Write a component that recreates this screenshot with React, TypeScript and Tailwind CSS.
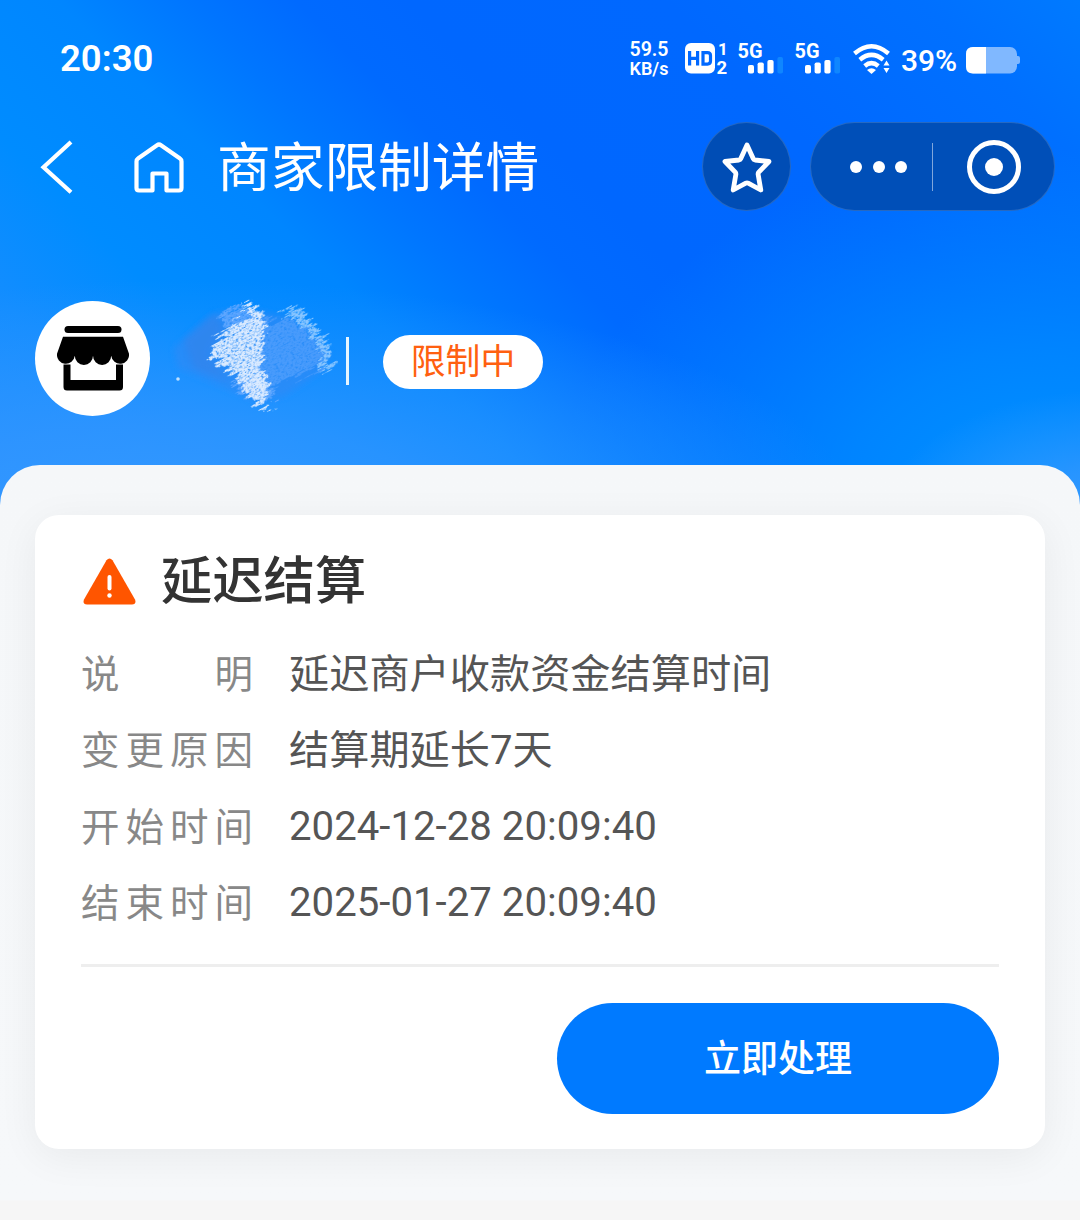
import React from "react";

const ROWS = [
    { label: ["说", "明"], value: "延迟商户收款资金结算时间", cjk: true },
    { label: ["变", "更", "原", "因"], value: "结算期延长7天", cjk: true },
    { label: ["开", "始", "时", "间"], value: "2024-12-28 20:09:40", cjk: false },
    { label: ["结", "束", "时", "间"], value: "2025-01-27 20:09:40", cjk: false },
];

function Signal() {
    return (
        <svg className="block h-8 w-[46px] overflow-visible" viewBox="0 0 46 32" fill="#fff">
            <text x="-0.5" y="16" fontSize="20" fontWeight="700" fontFamily="Roboto, sans-serif" textLength="25" lengthAdjust="spacingAndGlyphs">
                5G
            </text>
            <rect x="10" y="23" width="6" height="8.5" rx="1.8" />
            <rect x="19.6" y="20.5" width="6.2" height="11" rx="1.8" />
            <rect x="29.4" y="18" width="6.2" height="13.5" rx="1.8" />
            <rect x="39.4" y="15" width="5.6" height="16.5" rx="1.8" fill="#0f86ff" />
        </svg>
    );
}

function HdBadge() {
    return (
        <svg className="block h-8 w-[43px] overflow-visible" viewBox="0 0 43 32" fontFamily="Roboto, sans-serif" fontWeight="700">
            <rect x="0" y="1" width="30" height="30.5" rx="6" fill="#fff" />
            <g fill="none" stroke="#0068ff" strokeWidth="3.2">
                <path d="M4.6 9v14.6M12.6 9v14.6M4.6 16.3h8" />
                <path d="M18 10.6h4.5q3 0 3 3v5.5q0 3-3 3h-4.5z" />
            </g>
            <text x="33" y="13" fontSize="17" fill="#fff">1</text>
            <text x="31.5" y="31.5" fontSize="18.5" fill="#fff">2</text>
        </svg>
    );
}

function Wifi() {
    return (
        <svg className="block h-8 w-[38px]" viewBox="0 0 38 32" fill="none" stroke="#fff" strokeWidth="4.4">
            <path d="M1.5 11.5Q18.5-3 35.5 11.5" />
            <path d="M6.8 17.7Q18.5 8 30.2 17.7" />
            <path d="M11.7 24Q18.500 18.300 25.300 24" />
            <path d="M14 28Q18.500 24.500 23 28L18.500 32z" fill="#fff" stroke="none" />
            <path d="M33.500 18.500l3 5h-6zM33.500 31l3-5h-6z" fill="#fff" stroke="none" />
        </svg>
    );
}

function Battery() {
    return (
        <svg className="block h-8 w-[54px]" viewBox="0 0 54 32">
            <rect x="0" y="5" width="51" height="26.5" rx="7" fill="#80b8ff" />
            <path d="M51 14h1q2 0 2 2v4q0 2-2 2h-1z" fill="#80b8ff" />
            <path d="M20 5H7Q0 5 0 12v12.500q0 7 7 7h13z" fill="#fff" />
        </svg>
    );
}

function StoreIcon() {
    return (
        <svg className="mt-0.5 h-[66px] w-[72px]" viewBox="0 0 72 66" fill="#000">
            <rect x="7.5" y="0" width="57" height="7" rx="3.5" />
            <path d="M6 10.8h60l6 17a8.4 8.4 0 0 1-17.8 2a9 9 0 0 1-18.2 0a9 9 0 0 1-18.2 0A8.4 8.4 0 0 1 0 27.8z" />
            <path d="M6.5 38.5h7V54h45.500V38.500h7V61q0 3.500-3.500 3.500h-52.500q-3.500 0-3.500-3.500z" />
        </svg>
    );
}

/* Scribbled-over merchant name */
function MaskedName() {
    return (
        <svg className="h-[120px] w-[170px]" viewBox="168 298 170 120">
            <defs>
                <filter id="chalk" x="-15%" y="-15%" width="130%" height="130%">
                    <feTurbulence type="fractalNoise" baseFrequency="0.03 0.28" numOctaves="3" seed="4" result="edge" />
                    <feDisplacementMap in="SourceGraphic" in2="edge" scale="24" xChannelSelector="R" yChannelSelector="G" result="rough" />
                    <feTurbulence type="fractalNoise" baseFrequency="0.35 0.7" numOctaves="3" seed="9" />
                    <feColorMatrix values="0 0 0 0 1  0 0 0 0 1  0 0 0 0 1  3 0 0 0 -0.6" result="grain" />
                    <feComposite in="rough" in2="grain" operator="in" />
                </filter>
                <filter id="smudge">
                    <feGaussianBlur stdDeviation="3" />
                </filter>
            </defs>
            <path d="M174 348l38-34 30-6 50 10 38 36-10 18-36 24-26 6-46-20-34-14z" fill="#2f8af6" opacity="0.7" filter="url(#smudge)" />
            <path d="M184 340l30-26 10 14-16 28 20 24-34-12z" fill="#3a80e4" opacity="0.45" filter="url(#smudge)" />
            <g transform="rotate(-28 252 358)">
                <g filter="url(#chalk)">
                    <g transform="rotate(28 252 358)">
                        <path d="M262 320l24-2 22 10 18 30-22 16-34 12-16-14z" fill="#4a9bfc" />
                        <path d="M282 312l12-4 12 6 8 10 10 10 9 26-5 6-12 5 6-14-6-20-12-12-12-6z" fill="#8ac6ff" />
                        <path d="M218 316l22-10 20 6 4 12-20 6-20-4z" fill="#5da6ff" />
                        <path d="M232 384l14-8 24 8 8 16-14 2-20-6z" fill="#5da6ff" />
                    </g>
                </g>
                <g filter="url(#chalk)">
                    <g transform="rotate(28 252 358)">
                        <path d="M242 303l12 2 13 11-4 14 1 18-3 12 5 12 6 10-6 14 3 14-12-6-14-14-6-12-12-10-13-8-3-8 8-14 14-13 20-8z" fill="#dcebff" />
                    </g>
                </g>
            </g>
            <circle cx="178" cy="379" r="1.8" fill="#bfe1ff" />
        </svg>
    );
}

export default function App() {
    return (
        <div className="flex h-[1220px] w-[1080px] flex-col overflow-hidden bg-[radial-gradient(ellipse_680px_240px_at_180px_520px,rgba(56,154,255,0.9)_0%,rgba(52,150,255,0.75)_40%,rgba(40,144,255,0)_100%),radial-gradient(ellipse_230px_130px_at_1110px_520px,rgba(56,154,255,1)_0%,rgba(48,150,255,0.8)_40%,rgba(40,144,255,0)_100%),radial-gradient(ellipse_480px_340px_at_1040px_490px,rgba(0,146,255,1)_0%,rgba(0,142,255,0.75)_40%,rgba(0,134,255,0)_100%),linear-gradient(45deg,#1f90ff_0%,#128dff_14%,#008cff_24%,#0086ff_36%,#0076ff_44%,#006aff_51%,#0067ff_58%,#0068ff_74%,#0070ff_90%,#007aff_100%)] bg-[length:1080px_520px] bg-no-repeat font-[Roboto,'Noto_Sans_CJK_SC',sans-serif]">
            <header className="h-[465px] shrink-0 text-white">
                <div className="flex h-[110px] items-start pt-[42px] pl-[60px]">
                    <span className="-mt-px w-[567px] text-[36.5px] leading-9 font-semibold">20:30</span>
                    <div className="flex w-[44px] flex-col items-center text-[18px] leading-[18.5px] font-semibold">
                        <span className="-mt-px text-[19.5px]">59.5</span>
                        <span>KB/s</span>
                    </div>
                    <div className="ml-3.5">
                        <HdBadge />
                    </div>
                    <div className="ml-2.5">
                        <Signal />
                    </div>
                    <div className="ml-[11px]">
                        <Signal />
                    </div>
                    <div className="ml-[12px]">
                        <Wifi />
                    </div>
                    <span className="ml-2.5 w-[65px] pt-px text-[30px] leading-9 font-medium">39%</span>
                    <Battery />
                </div>

                <div className="flex h-[113px] items-center pl-10">
                    <svg className="h-[54px] w-[33px]" viewBox="0 0 33 54" fill="none" stroke="#fff" strokeWidth="4.2">
                        <path d="M31 2L3.500 27.300l27.500 25" />
                    </svg>
                    <svg className="ml-[61px] h-[52px] w-[50px]" viewBox="0 0 50 52" fill="none" stroke="#fff" strokeWidth="4.2" strokeLinejoin="round">
                        <path d="M23 4.2q2-1.4 4 0L46 17.5q1.5 1 1.5 3V47q0 2.5-2.5 2.5H32.5v-17h-14v17H5Q2.5 49.5 2.5 47V20.5q0-2 1.5-3z" />
                    </svg>
                    <h1 className="ml-[33px] w-[485px] pt-[5px] text-[53.7px] leading-none whitespace-nowrap">商家限制详情</h1>
                    <div className="flex size-[89px] items-center justify-center rounded-full border border-white/15 bg-[#004db5]">
                        <svg className="size-[52px]" viewBox="0 0 52 52" fill="none" stroke="#fff" strokeWidth="4.8" strokeLinejoin="round">
                            <path d="M26 4l6.3 13.7q.5 1.1 1.7 1.3L48 20.5 37.8 31.2q-.8.9-.7 2L39.8 49 27.2 42.2q-1.2-.6-2.400 0L12.200 49l2.700-15.800q.1-1.100-.7-2L4 20.500 18 19q1.200-.2 1.700-1.300z" />
                        </svg>
                    </div>
                    <div className="ml-[19px] flex h-[89px] w-[245px] items-center rounded-full border border-white/15 bg-[#004fb8]">
                        <div className="flex w-[121px] justify-end gap-[10.5px] pr-[25px]">
                            <i className="size-[12px] rounded-full bg-white" />
                            <i className="size-[12px] rounded-full bg-white" />
                            <i className="size-[12px] rounded-full bg-white" />
                        </div>
                        <div className="h-12 w-px bg-white/50" />
                        <div className="ml-[34px] flex size-[54px] items-center justify-center rounded-full border-[5.5px] border-white">
                            <i className="size-[18px] rounded-full bg-white" />
                        </div>
                    </div>
                </div>

                <div className="flex items-center pt-[75px] pl-[35px]">
                    <div className="flex size-[115px] items-center justify-center rounded-full bg-white">
                        <StoreIcon />
                    </div>
                    <div className="ml-[18px]">
                        <MaskedName />
                    </div>
                    <div className="mt-1.5 ml-[8px] h-12 w-[3px] bg-[#e6f5ff]" />
                    <span className="mt-[7px] ml-[34px] flex h-[54px] w-[160px] items-center justify-center rounded-full bg-white pt-0.5 text-[34.8px] leading-none text-[#ff6010]">
                        限制中
                    </span>
                </div>
            </header>

            <main className="flex-1 rounded-t-[40px] bg-[linear-gradient(to_bottom,#f5f7f9_0,#f6f8fa_735px,#f6f6f6_736px)] px-[35px] pt-[50px]">
                <section className="h-[634px] rounded-3xl bg-white px-[46px] shadow-[0_8px_40px_rgba(0,0,0,0.06)]">
                    <div className="flex h-[120px] items-center pt-[10px]">
                        <svg className="mt-[3px] ml-[2px] h-[47px] w-[53px]" viewBox="0 0 53 47">
                            <path d="M23.5 2.2q3-3.5 6 0L52 41.5q1.8 4.5-3 5H4q-4.8-.5-3-5z" fill="#ff5500" />
                            <path d="M26.5 19v11.5" stroke="#fff" strokeWidth="4" strokeLinecap="round" />
                            <circle cx="26.5" cy="37.5" r="2.2" fill="#fff" />
                        </svg>
                        <h2 className="ml-[25px] pt-1 text-[51.3px] leading-none font-medium text-[#333]">延迟结算</h2>
                    </div>
                    <dl className="text-[40.2px] leading-[76px]">
                        {ROWS.map((row) => (
                            <div key={row.label.join("")} className="flex h-[76.3px]">
                                <dt className="flex w-[172px] justify-between pt-0.5 text-[38.5px] text-[#888]">
                                    {row.label.map((ch) => (
                                        <span key={ch}>{ch}</span>
                                    ))}
                                </dt>
                                <dd className={`ml-[36px] whitespace-nowrap text-[#555] ${row.cjk ? "pt-0.5" : "pt-px"}`}>
                                    {row.value}
                                </dd>
                            </div>
                        ))}
                    </dl>
                    <div className="mt-[24px] h-[3px] bg-[#eee]" />
                    <button
                        type="button"
                        className="mt-[36px] ml-auto flex h-[111px] w-[442px] items-center justify-center rounded-full bg-[#007aff] pt-0.5 text-[37px] font-medium text-white"
                    >
                        立即处理
                    </button>
                </section>
            </main>
        </div>
    );
}
